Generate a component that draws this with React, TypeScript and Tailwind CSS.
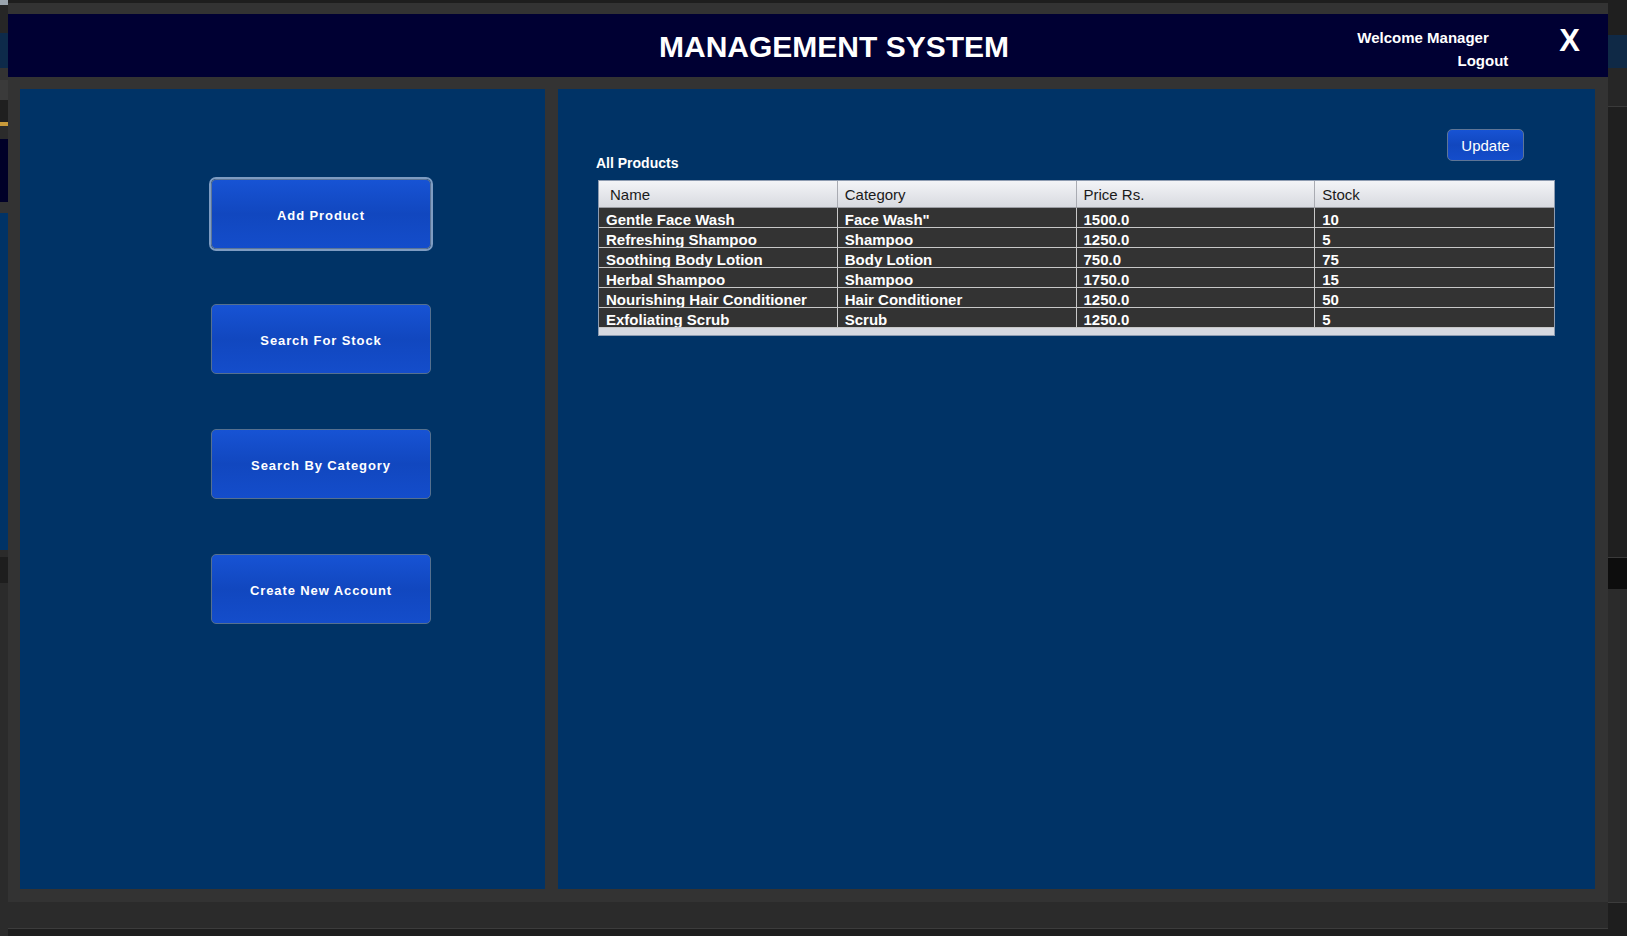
const products = [
  ["Gentle Face Wash", 'Face Wash"', "1500.0", "10"],
  ["Refreshing Shampoo", "Shampoo", "1250.0", "5"],
  ["Soothing Body Lotion", "Body Lotion", "750.0", "75"],
  ["Herbal Shampoo", "Shampoo", "1750.0", "15"],
  ["Nourishing Hair Conditioner", "Hair Conditioner", "1250.0", "50"],
  ["Exfoliating Scrub", "Scrub", "1250.0", "5"],
];

const menu = ["Add Product", "Search For Stock", "Search By Category", "Create New Account"];

const App = () => {
  return (
    <div
      className="w-[1627px] h-[936px] flex bg-[#2b2b2b] overflow-hidden"
      style={{ fontFamily: '"Liberation Sans", Arial, sans-serif' }}
    >
      {/* desktop peeking out on the left */}
      <div className="w-[8px] flex flex-col shrink-0">
        <div className="h-[5px] bg-[#9aa4ae]"></div>
        <div className="h-[28px] bg-[#262626]"></div>
        <div className="h-[35px] bg-[#0d2a4a]"></div>
        <div className="h-[12px] bg-[#333333]"></div>
        <div className="h-[20px] bg-[#3a3a3a]"></div>
        <div className="h-[22px] bg-[#1f1f1f]"></div>
        <div className="h-[4px] bg-[#c89a3a]"></div>
        <div className="h-[13px] bg-[#2b2b2b]"></div>
        <div className="h-[63px] bg-[#000028]"></div>
        <div className="h-[11px] bg-[#333333]"></div>
        <div className="h-[337px] bg-[#003366]"></div>
        <div className="h-[7px] bg-[#2b2b2b]"></div>
        <div className="h-[26px] bg-[#1e1e1e]"></div>
        <div className="flex-1 bg-[#2b2b2b]"></div>
      </div>

      <div className="w-[1600px] flex flex-col shrink-0">
        <div className="h-[3px] bg-[#1e1e1e]"></div>

        {/* window */}
        <div className="h-[899px] bg-[#333333] pt-[11px] flex flex-col">
          <header className="h-[63px] bg-[#000033] flex items-start text-white">
            <h1 className="ml-[651px] mt-[15px] text-[30px] leading-[36px] font-bold">MANAGEMENT SYSTEM</h1>
            <div className="ml-auto mt-[15px] w-[151px] flex flex-col text-[15px] font-bold leading-[17px]">
              <span>Welcome Manager</span>
              <span className="mt-[6px] self-end">Logout</span>
            </div>
            <button className="ml-[51px] mr-[28px] mt-[9px] text-[31px] leading-[36px] font-bold">X</button>
          </header>

          <div className="mt-[12px] h-[800px] pl-[12px] pr-[13px] flex gap-[13px]">
            {/* menu panel */}
            <aside className="w-[525px] bg-[#003366] pt-[90px] pl-[191px] flex flex-col gap-[55px]">
              {menu.map((label, i) => (
                <button
                  key={label}
                  className={`w-[220px] h-[70px] pt-[3px] rounded-[5px] bg-gradient-to-b from-[#1753d4] via-[#1147bf] to-[#144dcb] text-white text-[13px] font-bold tracking-[0.9px] ${
                    i === 0 ? "ring-2 ring-[#7e9cc2] border border-[#5b7598]" : "border border-[#55708f]"
                  }`}
                >
                  {label}
                </button>
              ))}
            </aside>

            {/* products panel */}
            <main className="w-[1037px] bg-[#003366] pt-[40px] px-[38px]">
              <div className="flex items-start h-[42px]">
                <span className="mt-[26px] text-white text-[14px] font-bold leading-[16px]">All Products</span>
                <button className="ml-auto mr-[33px] w-[77px] h-[32px] pt-[2px] rounded-[5px] border border-[#5e7596] bg-gradient-to-b from-[#1753d4] via-[#1147bf] to-[#144dcb] text-white text-[15px]">
                  Update
                </button>
              </div>

              <div className="mt-[9px] ml-[2px] w-[957px] border border-[#8d9bb0] bg-[#d6d9e0]">
                <div className="grid grid-cols-4 h-[27px] bg-gradient-to-b from-[#f3f4f7] to-[#d8dae0] border-b border-[#9a9ca2] text-[15px] text-[#1a1a1a]">
                  {["Name", "Category", "Price Rs.", "Stock"].map((h, i) => (
                    <div
                      key={h}
                      className={`flex items-center pt-[2px] border-r border-[#a9abb2] last:border-r-0 ${i === 0 ? "pl-[11px]" : "pl-[7px]"}`}
                    >
                      {h}
                    </div>
                  ))}
                </div>
                {products.map((row) => (
                  <div key={row[0]} className="grid grid-cols-4 h-[20px] bg-[#333333] border-b border-[#c8c8c8]">
                    {row.map((cell, j) => (
                      <div
                        key={j}
                        className="h-[19px] overflow-hidden pl-[7px] border-r border-[#c8c8c8] last:border-r-0 text-white text-[15px] font-bold leading-[23px] whitespace-nowrap"
                      >
                        {cell}
                      </div>
                    ))}
                  </div>
                ))}
                <div className="h-[7px]"></div>
              </div>
            </main>
          </div>
        </div>

        <div className="h-[26px] bg-[#2b2b2b]"></div>
        <div className="h-[1px] bg-[#3c3c3c]"></div>
        <div className="flex-1 bg-[#1e1e1e]"></div>
      </div>

      {/* desktop on the right */}
      <div className="w-[19px] flex flex-col shrink-0">
        <div className="h-[35px] bg-[#1f1f1f]"></div>
        <div className="h-[33px] bg-[#0f2946]"></div>
        <div className="h-[38px] bg-[#262626]"></div>
        <div className="h-[1px] bg-[#3a3a3a]"></div>
        <div className="h-[450px] bg-[#1f1f1f]"></div>
        <div className="h-[1px] bg-[#3a3a3a]"></div>
        <div className="h-[31px] bg-[#0d0d0d]"></div>
        <div className="h-[313px] bg-[#2b2b2b]"></div>
        <div className="h-[1px] bg-[#3c3c3c]"></div>
        <div className="flex-1 bg-[#1e1e1e]"></div>
      </div>
    </div>
  );
};

export default App;
